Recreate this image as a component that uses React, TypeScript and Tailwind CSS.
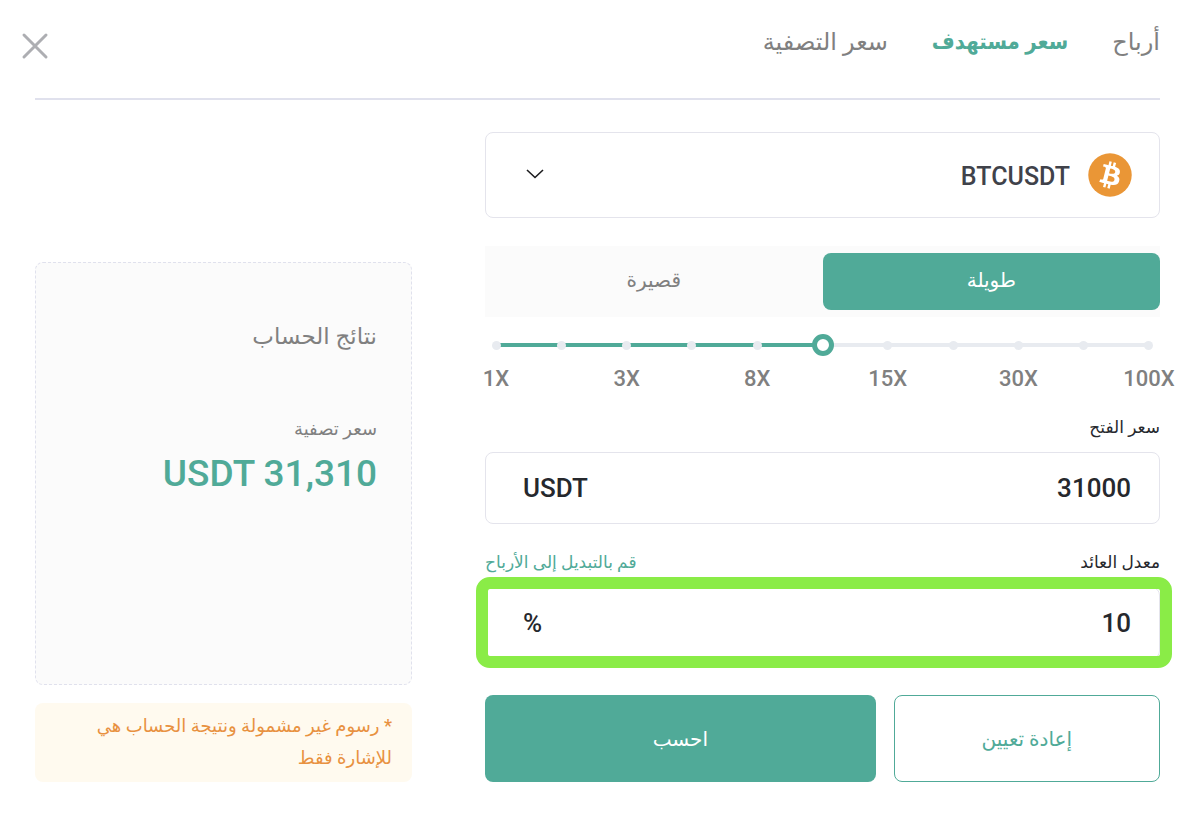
import { useState } from "react";

const tabs = [
  { id: "pnl", label: "أرباح" },
  { id: "target", label: "سعر مستهدف" },
  { id: "liquidation", label: "سعر التصفية" },
];

const sides = [
  { id: "long", label: "طويلة" },
  { id: "short", label: "قصيرة" },
];

// eleven stops, only every second one carries a label
const leverages = ["1X", "", "3X", "", "8X", "", "15X", "", "30X", "", "100X"];

function BitcoinIcon() {
  return (
    <svg viewBox="0 0 32 32" className="w-11 h-11 shrink-0" aria-hidden="true">
      <circle cx="16" cy="16" r="15.8" fill="#ea9636" />
      <path
        fill="#fff"
        d="M23.189 14.02c.314-2.096-1.283-3.223-3.465-3.975l.708-2.84-1.728-.43-.69 2.765c-.454-.114-.92-.22-1.385-.326l.695-2.783L15.596 6l-.708 2.839c-.376-.086-.746-.17-1.104-.26l.002-.009-2.384-.595-.46 1.846s1.283.294 1.256.312c.7.175.826.638.805 1.006l-.806 3.235c.048.012.11.03.18.057l-.183-.045-1.13 4.532c-.086.212-.303.531-.793.41.018.025-1.256-.313-1.256-.313l-.858 1.978 2.25.561c.418.105.828.215 1.231.318l-.715 2.872 1.727.43.708-2.84c.472.127.93.245 1.378.357l-.706 2.828 1.728.43.715-2.866c2.948.558 5.164.333 6.097-2.333.752-2.146-.037-3.385-1.588-4.192 1.13-.26 1.98-1.003 2.207-2.538zm-3.95 5.538c-.533 2.147-4.148.986-5.32.695l.95-3.805c1.172.293 4.929.872 4.37 3.11zm.535-5.569c-.487 1.953-3.495.96-4.47.717l.86-3.45c.975.243 4.118.696 3.61 2.733z"
      />
    </svg>
  );
}

function LeverageSlider() {
  const [step, setStep] = useState(5);
  const last = leverages.length - 1;

  return (
    <div dir="ltr" className="mt-[17px]">
      <div className="grid items-center">
        <div className="col-start-1 row-start-1 mx-[11px] h-1 bg-[#e8ebf0]">
          <div className="h-full bg-[#50aa98]" style={{ width: `${(step / last) * 100}%` }} />
        </div>
        <div className="col-start-1 row-start-1 mx-[11px] flex justify-between">
          {leverages.map((_, index) => (
            <span key={index} className="flex w-0 justify-center">
              <span className="h-[9px] w-[9px] shrink-0 rounded-full bg-[#e8ebf0]" />
            </span>
          ))}
        </div>
        <input
          type="range"
          aria-label="الرافعة المالية"
          min={0}
          max={last}
          value={step}
          onChange={(e) => setStep(Number(e.target.value))}
          className="z-10 col-start-1 row-start-1 m-0 h-[22px] w-full cursor-pointer appearance-none bg-transparent [&::-webkit-slider-thumb]:h-[22px] [&::-webkit-slider-thumb]:w-[22px] [&::-webkit-slider-thumb]:appearance-none [&::-webkit-slider-thumb]:rounded-full [&::-webkit-slider-thumb]:border-[5px] [&::-webkit-slider-thumb]:border-solid [&::-webkit-slider-thumb]:border-[#50aa98] [&::-webkit-slider-thumb]:bg-white"
        />
      </div>
      <div className="mx-[11px] mt-[9px] flex h-7 justify-between text-[22px] leading-7 font-medium text-[#808080]">
        {leverages.map((label, index) => (
          <span key={index} className="flex w-0 justify-center">
            {label}
          </span>
        ))}
      </div>
    </div>
  );
}

export default function App() {
  const [tab, setTab] = useState("target");
  const [side, setSide] = useState("long");
  const [price, setPrice] = useState("31000");
  const [rate, setRate] = useState("10");

  return (
    <main
      dir="rtl"
      lang="ar"
      className="bg-white pt-6 pr-[42px] pb-11 pl-[35px] font-[Roboto,'DejaVu_Sans',sans-serif] text-[#26282d]"
    >
      <header className="flex h-19 items-start justify-between border-b-2 border-[#e0e1ed]">
        <nav className="flex gap-11 text-2xl leading-9">
          {tabs.map((item) => (
            <button
              key={item.id}
              type="button"
              onClick={() => setTab(item.id)}
              className={
                item.id === tab
                  ? "font-[Roboto,'DejaVu_Sans_Condensed','DejaVu_Sans',sans-serif] text-[22px] font-bold text-[#50aa98]"
                  : "text-[#808080]"
              }
            >
              {item.label}
            </button>
          ))}
        </nav>
        <button type="button" aria-label="إغلاق" className="-ml-[14px] mt-2 text-[#adaeb2]">
          <svg viewBox="0 0 28 28" className="h-7 w-7" fill="none" stroke="currentColor" strokeWidth="3" strokeLinecap="round">
            <path d="M3 3l22 22M25 3L3 25" />
          </svg>
        </button>
      </header>

      <div className="mt-8 grid grid-cols-[675fr_377fr] items-end gap-[73px]">
        <form onSubmit={(e) => e.preventDefault()}>
          <div className="flex h-[86px] items-center rounded-lg border border-[#e4e4ec] pr-[27px] pl-[41px]">
            <BitcoinIcon />
            <select
              aria-label="زوج التداول"
              className="mr-[18px] h-full flex-1 appearance-none bg-transparent pt-1 text-[25px] font-medium text-[#40424a] outline-none"
            >
              <option>BTCUSDT</option>
            </select>
            <svg viewBox="0 0 16 10" className="h-[10px] w-4 shrink-0 overflow-visible" fill="none" stroke="#1c1c1e" strokeWidth="1.6">
              <path d="M0 0l8 7.500 8-7.500" />
            </svg>
          </div>

          <div className="mt-7 flex bg-[#fbfbfb] py-[7px]">
            {sides.map((item) => (
              <button
                key={item.id}
                type="button"
                aria-pressed={item.id === side}
                onClick={() => setSide(item.id)}
                className={`h-[57px] flex-1 rounded-lg pb-1 text-xl font-medium ${
                  item.id === side ? "bg-[#50aa98] text-white" : "text-[#808080]"
                }`}
              >
                {item.label}
              </button>
            ))}
          </div>

          <LeverageSlider />

          <label htmlFor="price" className="mt-[18px] block text-[17px] leading-8">
            سعر الفتح
          </label>
          <div className="mt-[9px] flex h-18 items-center rounded-lg border border-[#e4e4ec] pr-7 pl-[37px] text-[26px] font-medium">
            <input
              id="price"
              value={price}
              onChange={(e) => setPrice(e.target.value)}
              className="h-full min-w-0 flex-1 outline-none"
            />
            <span>USDT</span>
          </div>

          <div className="mt-[22px] flex justify-between text-[17px] leading-8">
            <label htmlFor="rate">معدل العائد</label>
            <button type="button" className="text-[#50aa98]">
              قم بالتبديل إلى الأرباح
            </button>
          </div>
          <div className="relative mt-[9px] flex h-18 items-center rounded-lg border border-[#e4e4ec] pr-7 pl-[37px] text-[26px] font-medium">
            <input
              id="rate"
              value={rate}
              onChange={(e) => setRate(e.target.value)}
              className="h-full min-w-0 flex-1 outline-none"
            />
            <span>%</span>
            <span className="pointer-events-none absolute -top-[11px] -right-[13px] -bottom-[10px] -left-[10px] rounded-[14px] border-12 border-[#8aec47]" />
          </div>

          <div className="mt-9 grid h-[87px] grid-cols-[15fr_22fr] gap-[18px] text-xl font-medium">
            <button type="reset" className="rounded-lg border border-[#50aa98] text-[#50aa98]">
              إعادة تعيين
            </button>
            <button type="submit" className="rounded-lg bg-[#50aa98] text-white">
              احسب
            </button>
          </div>
        </form>

        <aside>
          <section className="h-[423px] rounded-lg border border-dashed border-[#e0e1ed] bg-[#fbfbfb] px-[34px] pt-14">
            <h2 className="text-[23px] leading-9 text-[#808080]">نتائج الحساب</h2>
            <p className="mt-[58px] text-lg leading-8 text-[#808080]">سعر تصفية</p>
            <p className="mt-[9px] text-[37px] leading-10 font-medium text-[#50aa98]">USDT 31,310</p>
          </section>
          <p className="mt-[18px] rounded-lg bg-[#fffaef] px-5 pt-[7px] pb-2 text-lg leading-8 font-medium text-[#e8913f]">
            * رسوم غير مشمولة ونتيجة الحساب هي للإشارة فقط
          </p>
        </aside>
      </div>
    </main>
  );
}
